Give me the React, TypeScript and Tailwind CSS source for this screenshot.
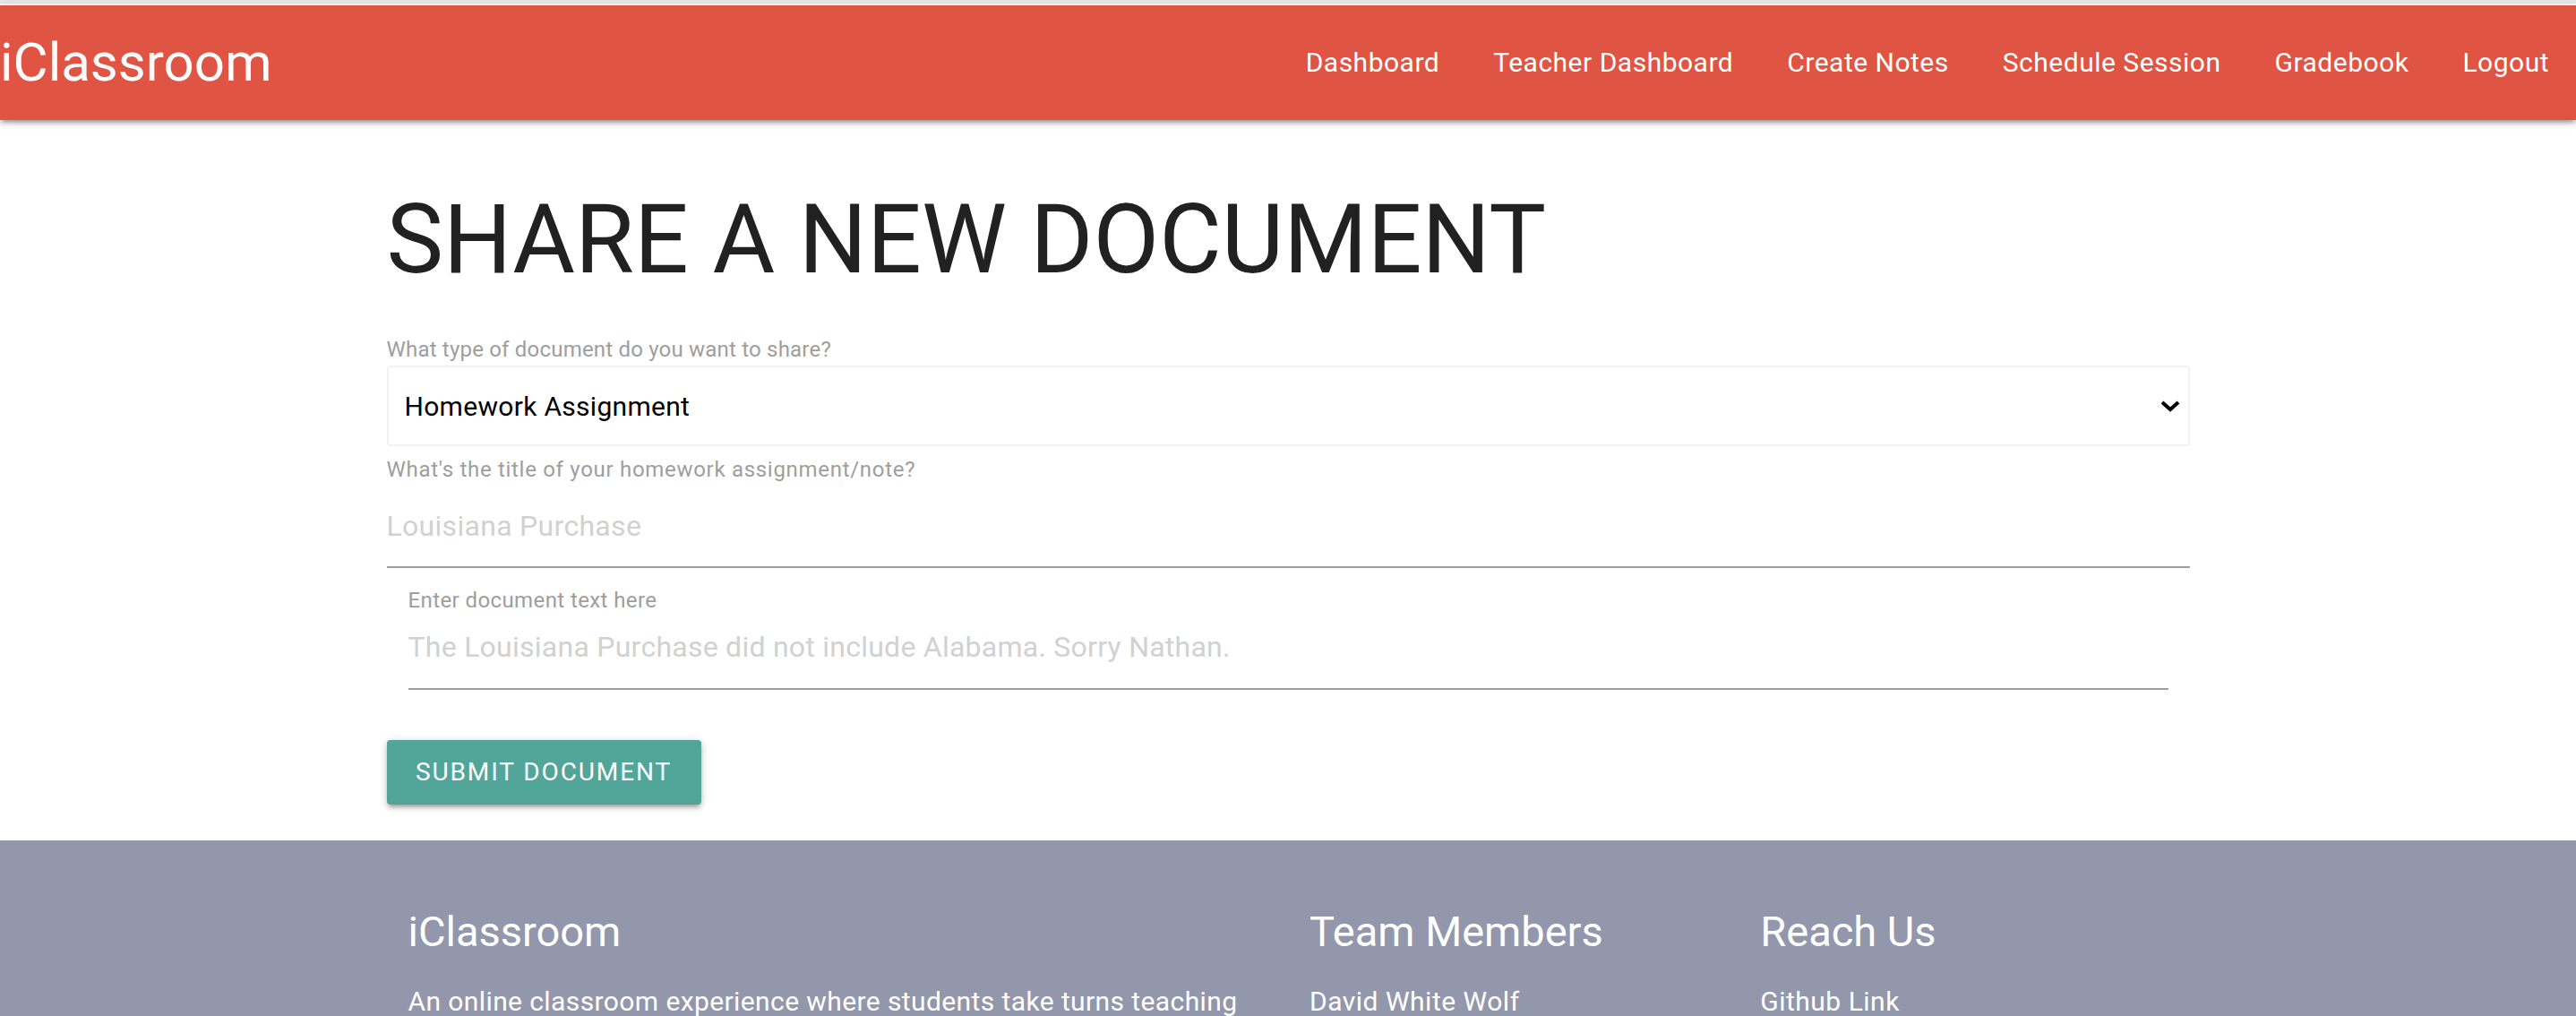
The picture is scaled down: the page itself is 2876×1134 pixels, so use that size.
import React from "react";

const links = ["Dashboard", "Teacher Dashboard", "Create Notes", "Schedule Session", "Gradebook", "Logout"];

export default function App() {
  return (
    <div className="min-h-[1134px] bg-white font-['Roboto',sans-serif] text-[#212121]">
      <div className="h-[4px] bg-[#e6e6e6]" />
      <div className="h-[2px] bg-white" />
      <nav className="relative z-10 flex h-[128px] items-center justify-between bg-[#e05444] shadow-[0_4px_4px_0_rgba(0,0,0,0.14),0_6px_2px_-4px_rgba(0,0,0,0.12),0_2px_10px_0_rgba(0,0,0,0.2)]">
        <div className="pl-0 text-[60px] leading-[128px] text-white">iClassroom</div>
        <ul className="flex h-full items-center">
          {links.map((l) => (
            <li key={l} className="px-[30px] text-[30px] leading-[128px] tracking-[0.5px] text-white">
              {l}
            </li>
          ))}
        </ul>
      </nav>

      <main className="mx-auto w-[2013px]">
        <h2 className="mt-[75px] text-[107px] font-normal leading-[117px] text-[#212121]">SHARE A NEW DOCUMENT</h2>

        <div className="mt-[46px] text-[24px] leading-[36px] tracking-[0.2px] text-[#9e9e9e]">
          What type of document do you want to share?
        </div>
        <div className="flex h-[90px] w-full items-center justify-between rounded-[4px] border-2 border-[#f2f2f2] bg-white pl-[18px] pr-[8px]">
          <span className="text-[30px] tracking-[0.3px] text-black">Homework Assignment</span>
          <svg width="24" height="16" viewBox="0 0 24 16">
            <polyline points="3,4 12,12 21,4" fill="none" stroke="#000" strokeWidth="4" />
          </svg>
        </div>

        <div className="mt-[8px] text-[24px] leading-[36px] tracking-[0.7px] text-[#9e9e9e]">
          What's the title of your homework assignment/note?
        </div>
        <div className="flex h-[92px] items-center border-b-2 border-[#9e9e9e] text-[32px] tracking-[0.3px] text-[#d1d1d1]">
          Louisiana Purchase
        </div>

        <div className="px-[24px]">
          <div className="mt-[18px] text-[24px] leading-[36px] tracking-[0.4px] text-[#9e9e9e]">Enter document text here</div>
          <div className="mt-[10px] border-b-2 border-[#9e9e9e] pb-[22px] text-[32px] leading-[48px] tracking-[0.25px] text-[#d1d1d1]">
            The Louisiana Purchase did not include Alabama. Sorry Nathan.
          </div>
        </div>

        <button className="mt-[56px] flex h-[72px] w-[351px] items-center justify-center rounded-[4px] bg-[#52a599] text-[28px] uppercase tracking-[1.9px] text-white shadow-[0_4px_4px_0_rgba(0,0,0,0.14),0_6px_2px_-4px_rgba(0,0,0,0.12),0_2px_10px_0_rgba(0,0,0,0.2)]">
          Submit Document
        </button>
      </main>

      <footer className="mt-[40px] bg-[#9397ab] pb-[200px] pt-[72px] text-white">
        <div className="mx-auto flex w-[2013px]">
          <div className="w-1/2 px-[24px]">
            <h5 className="text-[47px] leading-[60px]">iClassroom</h5>
            <p className="mt-[25px] text-[30px] leading-[45px] tracking-[0.4px]">
              An online classroom experience where students take turns teaching
            </p>
          </div>
          <div className="w-1/4 px-[24px]">
            <h5 className="text-[47px] leading-[60px]">Team Members</h5>
            <p className="mt-[25px] text-[30px] leading-[45px] tracking-[0.5px]">David White Wolf</p>
          </div>
          <div className="w-1/4 px-[24px]">
            <h5 className="text-[47px] leading-[60px]">Reach Us</h5>
            <p className="mt-[25px] text-[30px] leading-[45px] tracking-[0.5px]">Github Link</p>
          </div>
        </div>
      </footer>
    </div>
  );
}
